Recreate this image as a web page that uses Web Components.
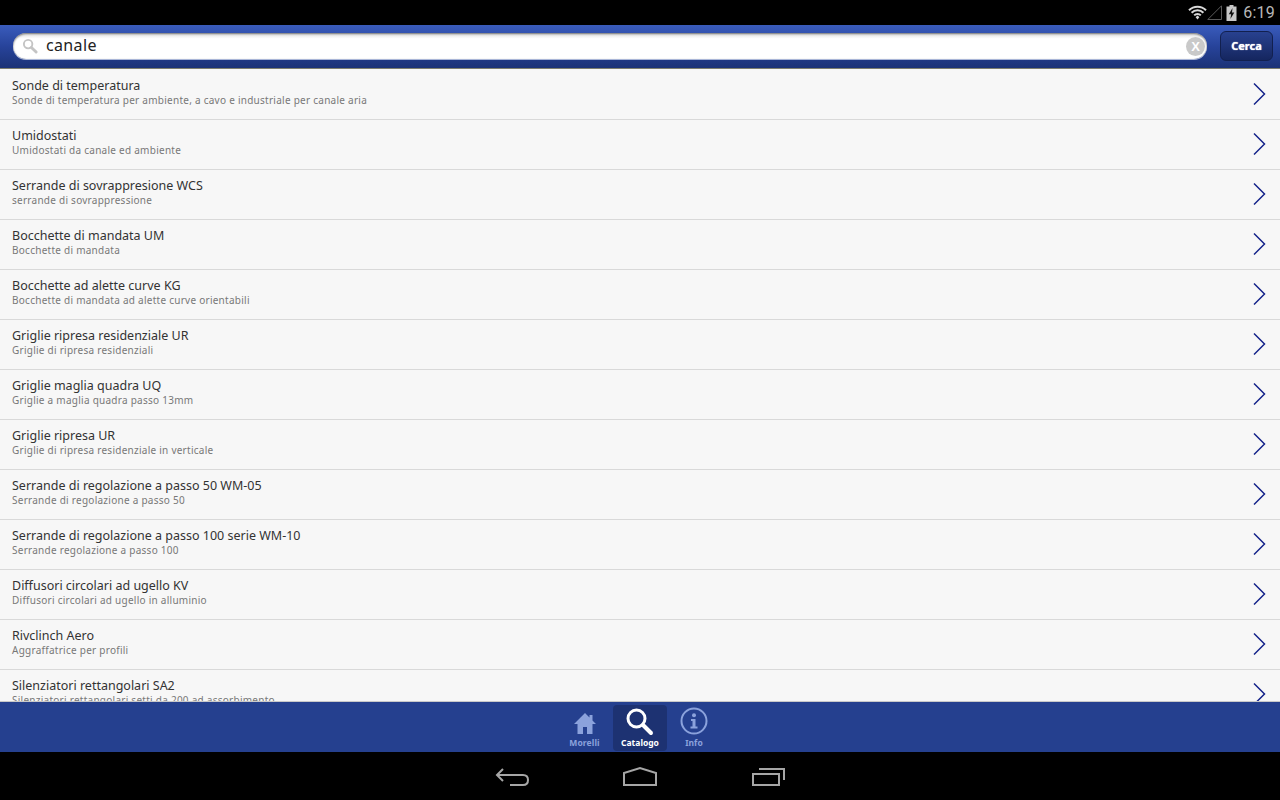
<!DOCTYPE html>
<html lang="it">
<head>
<meta charset="utf-8">
<title>Catalogo</title>
<style>
html, body { margin: 0; height: 100%; background: #000; overflow: hidden; }
body { font-family: "Noto Sans", sans-serif; }
app-shell { height: 800px; }
</style>
</head>
<body>
<app-shell>
	<status-bar slot="status"></status-bar>
	<search-bar slot="search" value="canale"></search-bar>
	<result-item title="Sonde di temperatura" sub="Sonde di temperatura per ambiente, a cavo e industriale per canale aria"></result-item>
	<result-item title="Umidostati" sub="Umidostati da canale ed ambiente"></result-item>
	<result-item title="Serrande di sovrappresione WCS" sub="serrande di sovrappressione"></result-item>
	<result-item title="Bocchette di mandata UM" sub="Bocchette di mandata"></result-item>
	<result-item title="Bocchette ad alette curve KG" sub="Bocchette di mandata ad alette curve orientabili"></result-item>
	<result-item title="Griglie ripresa residenziale UR" sub="Griglie di ripresa residenziali"></result-item>
	<result-item title="Griglie maglia quadra UQ" sub="Griglie a maglia quadra passo 13mm"></result-item>
	<result-item title="Griglie ripresa UR" sub="Griglie di ripresa residenziale in verticale"></result-item>
	<result-item title="Serrande di regolazione a passo 50 WM-05" sub="Serrande di regolazione a passo 50"></result-item>
	<result-item title="Serrande di regolazione a passo 100 serie WM-10" sub="Serrande regolazione a passo 100"></result-item>
	<result-item title="Diffusori circolari ad ugello KV" sub="Diffusori circolari ad ugello in alluminio"></result-item>
	<result-item title="Rivclinch Aero" sub="Aggraffatrice per profili"></result-item>
	<result-item title="Silenziatori rettangolari SA2" sub="Silenziatori rettangolari setti da 200 ad assorbimento"></result-item>
	<tab-bar slot="tabs"></tab-bar>
	<nav-bar slot="nav"></nav-bar>
</app-shell>

<script>
class AppShell extends HTMLElement {
	constructor() {
		super();
		this.attachShadow({ mode: "open" }).innerHTML = `
		<style>
			:host { display: flex; flex-direction: column; width: 1280px; }
			main { flex: 1; min-height: 0; overflow: hidden; box-sizing: border-box; padding-top: 1px; background: #f7f7f7; border-bottom: 1px solid #c9c9c9; }
		</style>
		<slot name="status"></slot>
		<slot name="search"></slot>
		<main><slot></slot></main>
		<slot name="tabs"></slot>
		<slot name="nav"></slot>`;
	}
}

class StatusBar extends HTMLElement {
	constructor() {
		super();
		this.attachShadow({ mode: "open" }).innerHTML = `
		<style>
			:host { display: flex; align-items: center; justify-content: flex-end; height: 25px; background: #000; color: #b8b8b8; padding-right: 5px; }
			svg { display: block; }
			span { font: 16px/25px Roboto, sans-serif; margin-left: 6px; letter-spacing: .2px; }
		</style>
		<svg width="19" height="15" viewBox="0 0 19 15" fill="none" stroke="#d8d8d8" stroke-width="2">
			<path d="M1 5.200a12 12 0 0 1 17 0"/><path d="M3.600 7.800a8.300 8.300 0 0 1 11.800 0"/><path d="M6.200 10.400a4.600 4.600 0 0 1 6.600 0"/>
			<path d="M7.600 12.200 9.500 10.600l1.900 1.600-1.900 2.200z" fill="#d8d8d8" stroke="none"/>
		</svg>
		<svg width="15" height="15" viewBox="0 0 15 15" fill="none" stroke="#5a5a5a"><path d="M14.500.8V14.500H.8z"/></svg>
		<svg width="11" height="16" viewBox="0 0 11 16" style="margin-left:4px"><path d="M3.500 0h4v1.500H10.500V16H.5V1.500h3z" fill="#c8c8c8"/><path d="M6.500 3 2.800 9.300h2.300L4.400 14 8.300 7.400H6z" fill="#111"/></svg>
		<span>6:19</span>`;
	}
}

class SearchBar extends HTMLElement {
	constructor() {
		super();
		this.attachShadow({ mode: "open" }).innerHTML = `
		<style>
			:host { display: flex; align-items: center; gap: 13px; box-sizing: border-box; height: 44px; padding: 0 7px 2px 13px; background: linear-gradient(#3a5cbc, #27439a 50%, #1c3276); border-bottom: 1px solid #7d7d6e; }
			.field { flex: 1; display: flex; align-items: center; height: 26px; border-radius: 13px; background: linear-gradient(#dcdcdc, #fff 22%, #fff); box-shadow: 0 1px 0 #a9b6d8, inset 0 1px 2px #777; padding: 0 2px 0 9px; }
			.glass { flex: none; }
			.value { flex: 1; margin-left: 8px; padding-bottom: 2px; font: 16px/24px "Noto Sans", sans-serif; color: #222; letter-spacing: .35px; }
			.clear { flex: none; box-sizing: border-box; width: 19px; height: 19px; margin-top: 2px; border-radius: 50%; background: #c9c9c9; color: #fff; font: bold 13px/19px "Liberation Sans", sans-serif; text-align: center; }
			button { flex: none; appearance: none; box-sizing: border-box; width: 53px; height: 30px; padding: 0; border: 1px solid #12204f; border-radius: 6px; background: linear-gradient(#28418f, #15265f); color: #fff; font: bold 11px/28px "Noto Sans", sans-serif; text-shadow: 0 0 1px #fff; }
		</style>
		<div class="field">
			<svg class="glass" width="16" height="16" viewBox="0 0 17 17" fill="none" stroke="#c4c4c4"><circle cx="6.500" cy="6.500" r="4.500" stroke-width="2"/><path d="m10 10 5 5" stroke-width="3" stroke-linecap="round"/></svg>
			<span class="value"></span>
			<span class="clear">X</span>
		</div>
		<button>Cerca</button>`;
		this.shadowRoot.querySelector(".value").textContent = this.getAttribute("value");
	}
}

class ResultItem extends HTMLElement {
	constructor() {
		super();
		this.attachShadow({ mode: "open" }).innerHTML = `
		<style>
			:host { display: flex; align-items: center; box-sizing: border-box; height: 50px; padding: 0 14px 0 12px; border-bottom: 1px solid #d9d9d9; }
			.text { flex: 1; min-width: 0; padding-bottom: 4px; }
			.title { font-size: 12.500px; line-height: 16px; color: #333; letter-spacing: 0; }
			.sub { font-size: 10px; line-height: 13px; color: #777; letter-spacing: .26px; }
			svg { flex: none; margin-bottom: 2px; }
		</style>
		<div class="text"><div class="title"></div><div class="sub"></div></div>
		<svg width="14" height="24" viewBox="0 0 14 24" fill="none" stroke="#15248a" stroke-width="1.500"><path d="m2 1.500 10.500 10.500L2 22.500"/></svg>`;
		this.shadowRoot.querySelector(".title").textContent = this.getAttribute("title");
		this.shadowRoot.querySelector(".sub").textContent = this.getAttribute("sub");
		this.removeAttribute("title");
	}
}

class TabItem extends HTMLElement {
	constructor() {
		super();
		this.attachShadow({ mode: "open" }).innerHTML = `
		<style>
			:host { display: flex; flex-direction: column; align-items: center; justify-content: flex-end; box-sizing: border-box; width: 54px; height: 46px; padding-bottom: 3px; border-radius: 4px; color: #8ba2dc; font: bold 8.500px/11px "Noto Sans", sans-serif; }
			:host([active]) { background: #1d3272; color: #fff; }
			:host([shift]) { padding-right: 3px; letter-spacing: .1px; }
			::slotted(svg) { display: block; margin-bottom: 1px; }
		</style>
		<slot name="icon"></slot>
		<slot></slot>`;
	}
}

class TabBar extends HTMLElement {
	constructor() {
		super();
		this.attachShadow({ mode: "open" }).innerHTML = `
		<style>
			:host { display: flex; justify-content: center; gap: 0; box-sizing: border-box; height: 50px; padding: 3px 0 0; background: #25408f; }
		</style>
		<tab-item shift>
			<svg slot="icon" width="26" height="27" viewBox="0 0 26 27" fill="#8ba2dc"><path d="M13 4 2 15h3.500v10h5.500v-7h4v7h5.500V15H24l-3.500-3.500V6h-3v2.500z"/></svg>
			Morelli
		</tab-item>
		<tab-item active>
			<svg slot="icon" width="30" height="29" viewBox="0 0 30 29" fill="none" stroke="#fff"><circle cx="11.500" cy="11.500" r="8.500" stroke-width="3"/><path d="m18 18 8 8" stroke-width="4" stroke-linecap="round"/></svg>
			Catalogo
		</tab-item>
		<tab-item>
			<svg slot="icon" width="30" height="29" viewBox="0 0 30 29" fill="none"><circle cx="15" cy="14" r="12.500" stroke="#8ba2dc" stroke-width="2"/><circle cx="15" cy="8.200" r="2" fill="#8ba2dc"/><path d="M12 12h4.500v7.500H18.500v2h-7v-2h2v-5.500H12z" fill="#8ba2dc"/></svg>
			Info
		</tab-item>`;
	}
}

class NavBar extends HTMLElement {
	constructor() {
		super();
		this.attachShadow({ mode: "open" }).innerHTML = `
		<style>
			:host { display: flex; justify-content: center; align-items: center; gap: 92px; height: 48px; padding-right: 1px; background: #000; }
			svg { display: block; }
		</style>
		<svg width="36" height="20" viewBox="0 0 36 20" fill="none" stroke="#a6a6a6" stroke-width="2"><path d="M9 3 3 9l6 6"/><path d="M3 9h26c3 0 5 2 5 5s-2 5-5 5H16"/></svg>
		<svg width="36" height="20" viewBox="0 0 36 20" fill="none" stroke="#a6a6a6" stroke-width="2"><path d="M2 19V7l16-5 16 5v12z"/></svg>
		<svg width="36" height="20" viewBox="0 0 36 20" fill="none" stroke="#a6a6a6" stroke-width="2"><path d="M3 8h26v11H3z"/><path d="M9 3h25v11"/></svg>`;
	}
}

customElements.define("app-shell", AppShell);
customElements.define("status-bar", StatusBar);
customElements.define("search-bar", SearchBar);
customElements.define("result-item", ResultItem);
customElements.define("tab-item", TabItem);
customElements.define("tab-bar", TabBar);
customElements.define("nav-bar", NavBar);
</script>
</body>
</html>
